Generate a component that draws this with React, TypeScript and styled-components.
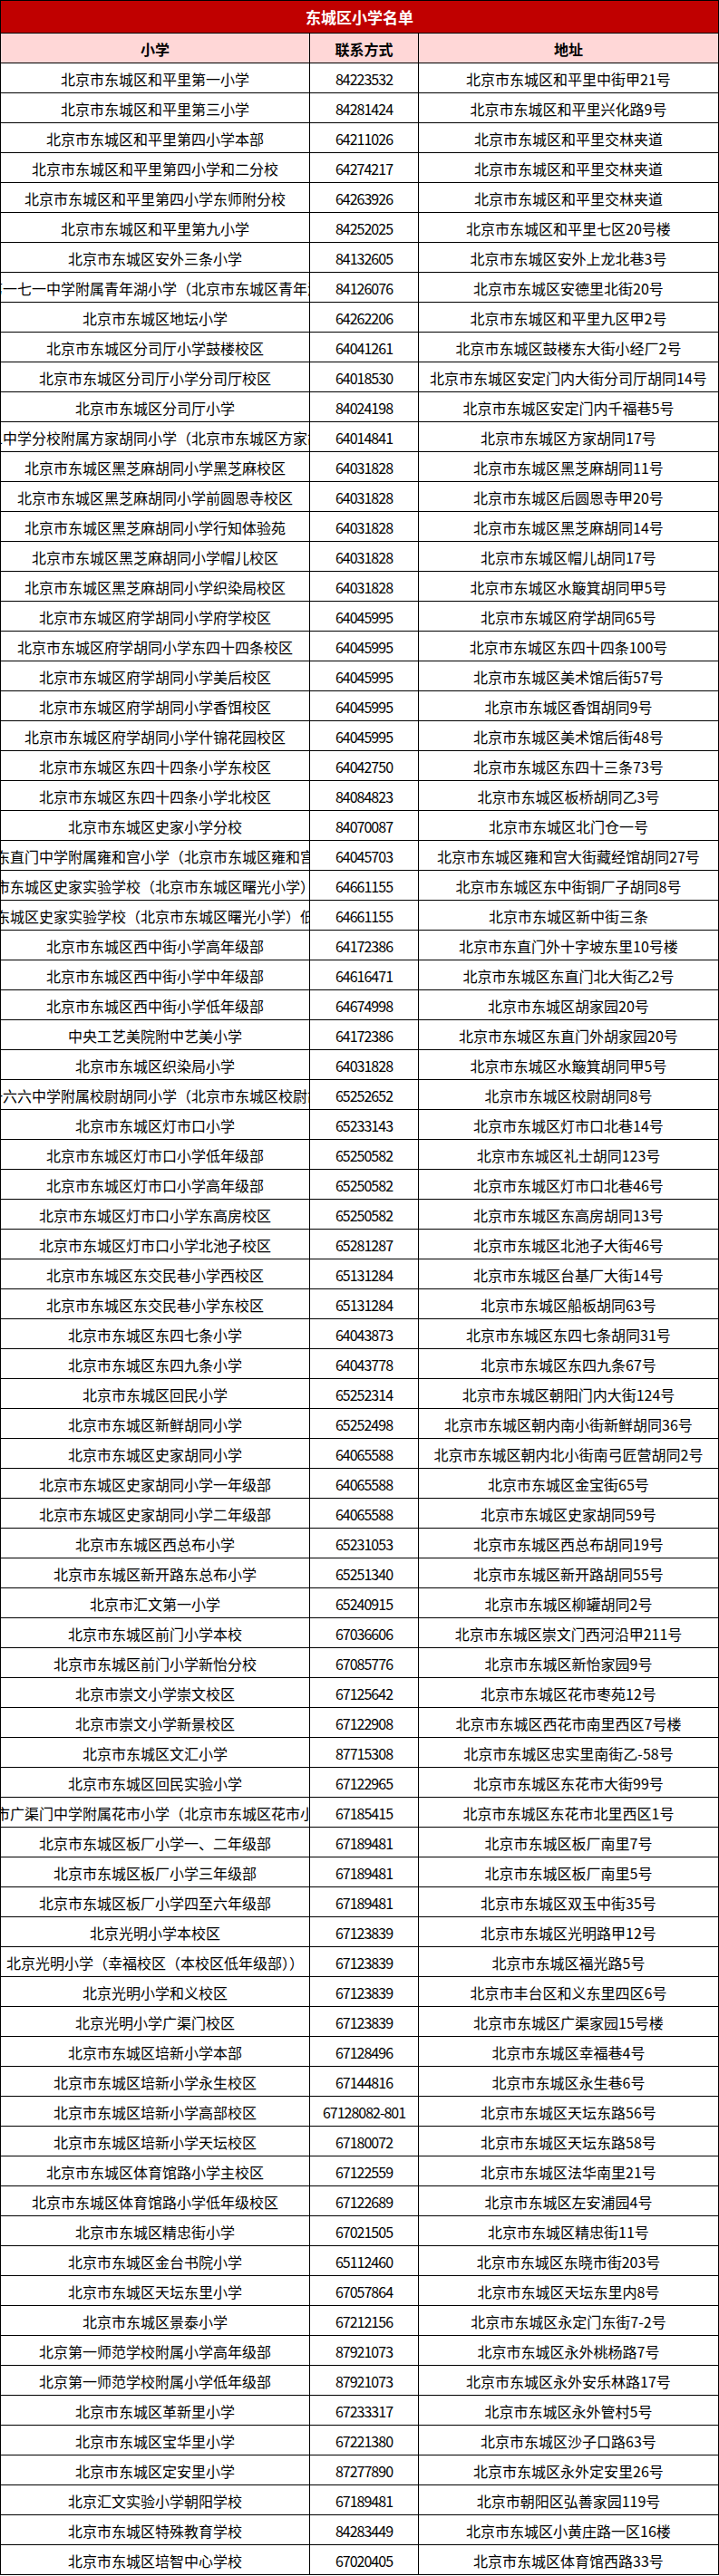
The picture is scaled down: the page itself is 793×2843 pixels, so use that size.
import React from "react";
import styled, { createGlobalStyle } from "styled-components";

const GlobalStyle = createGlobalStyle`
  html, body { margin: 0; padding: 0; background: #ffffff; }
  body {
    font-family: "Noto Sans CJK SC", "Noto Sans", sans-serif;
    color: #000000;
  }
`;

const Sheet = styled.div`
  width: 793px;
  box-sizing: border-box;
  border-left: 1px solid #000;
  border-top: 1px solid #000;
`;

const Title = styled.div`
  height: 36px;
  box-sizing: border-box;
  display: flex;
  align-items: center;
  justify-content: center;
  background: #c00000;
  color: #ffffff;
  font-weight: 700;
  font-size: 17px;
  border-right: 1px solid #000;
  border-bottom: 1px solid #000;
`;

const Row = styled.div`
  display: grid;
  grid-template-columns: 341px 120px 331px;
  height: 33px;
`;

const Cell = styled.div<{ $head?: boolean; $num?: boolean }>`
  box-sizing: border-box;
  height: 33px;
  display: flex;
  align-items: center;
  justify-content: center;
  overflow: hidden;
  white-space: nowrap;
  border-right: 1px solid #000;
  border-bottom: 1px solid #000;
  background: ${(p) => (p.$head ? "#ffd7d7" : "#ffffff")};
  font-size: 16px;
  font-weight: ${(p) => (p.$head ? 700 : 400)};
  letter-spacing: ${(p) => (p.$num ? "-1px" : "0")};
  padding-top: 2px;
`;

const Text = styled.span`
  flex-shrink: 0;
`;

type School = [string, string, string];

const schools: School[] = [
  ["北京市东城区和平里第一小学", "84223532", "北京市东城区和平里中街甲21号"],
  ["北京市东城区和平里第三小学", "84281424", "北京市东城区和平里兴化路9号"],
  ["北京市东城区和平里第四小学本部", "64211026", "北京市东城区和平里交林夹道"],
  ["北京市东城区和平里第四小学和二分校", "64274217", "北京市东城区和平里交林夹道"],
  ["北京市东城区和平里第四小学东师附分校", "64263926", "北京市东城区和平里交林夹道"],
  ["北京市东城区和平里第九小学", "84252025", "北京市东城区和平里七区20号楼"],
  ["北京市东城区安外三条小学", "84132605", "北京市东城区安外上龙北巷3号"],
  ["北京市第一七一中学附属青年湖小学（北京市东城区青年湖小学）", "84126076", "北京市东城区安德里北街20号"],
  ["北京市东城区地坛小学", "64262206", "北京市东城区和平里九区甲2号"],
  ["北京市东城区分司厅小学鼓楼校区", "64041261", "北京市东城区鼓楼东大街小经厂2号"],
  ["北京市东城区分司厅小学分司厅校区", "64018530", "北京市东城区安定门内大街分司厅胡同14号"],
  ["北京市东城区分司厅小学", "84024198", "北京市东城区安定门内千福巷5号"],
  ["北京市第二中学分校附属方家胡同小学（北京市东城区方家胡同小学）", "64014841", "北京市东城区方家胡同17号"],
  ["北京市东城区黑芝麻胡同小学黑芝麻校区", "64031828", "北京市东城区黑芝麻胡同11号"],
  ["北京市东城区黑芝麻胡同小学前圆恩寺校区", "64031828", "北京市东城区后圆恩寺甲20号"],
  ["北京市东城区黑芝麻胡同小学行知体验苑", "64031828", "北京市东城区黑芝麻胡同14号"],
  ["北京市东城区黑芝麻胡同小学帽儿校区", "64031828", "北京市东城区帽儿胡同17号"],
  ["北京市东城区黑芝麻胡同小学织染局校区", "64031828", "北京市东城区水簸箕胡同甲5号"],
  ["北京市东城区府学胡同小学府学校区", "64045995", "北京市东城区府学胡同65号"],
  ["北京市东城区府学胡同小学东四十四条校区", "64045995", "北京市东城区东四十四条100号"],
  ["北京市东城区府学胡同小学美后校区", "64045995", "北京市东城区美术馆后街57号"],
  ["北京市东城区府学胡同小学香饵校区", "64045995", "北京市东城区香饵胡同9号"],
  ["北京市东城区府学胡同小学什锦花园校区", "64045995", "北京市东城区美术馆后街48号"],
  ["北京市东城区东四十四条小学东校区", "64042750", "北京市东城区东四十三条73号"],
  ["北京市东城区东四十四条小学北校区", "84084823", "北京市东城区板桥胡同乙3号"],
  ["北京市东城区史家小学分校", "84070087", "北京市东城区北门仓一号"],
  ["北京市东直门中学附属雍和宫小学（北京市东城区雍和宫小学）", "64045703", "北京市东城区雍和宫大街藏经馆胡同27号"],
  ["北京市东城区史家实验学校（北京市东城区曙光小学）本部", "64661155", "北京市东城区东中街铜厂子胡同8号"],
  ["北京市东城区史家实验学校（北京市东城区曙光小学）低年级部", "64661155", "北京市东城区新中街三条"],
  ["北京市东城区西中街小学高年级部", "64172386", "北京市东直门外十字坡东里10号楼"],
  ["北京市东城区西中街小学中年级部", "64616471", "北京市东城区东直门北大街乙2号"],
  ["北京市东城区西中街小学低年级部", "64674998", "北京市东城区胡家园20号"],
  ["中央工艺美院附中艺美小学", "64172386", "北京市东城区东直门外胡家园20号"],
  ["北京市东城区织染局小学", "64031828", "北京市东城区水簸箕胡同甲5号"],
  ["北京市第一六六中学附属校尉胡同小学（北京市东城区校尉胡同小学）", "65252652", "北京市东城区校尉胡同8号"],
  ["北京市东城区灯市口小学", "65233143", "北京市东城区灯市口北巷14号"],
  ["北京市东城区灯市口小学低年级部", "65250582", "北京市东城区礼士胡同123号"],
  ["北京市东城区灯市口小学高年级部", "65250582", "北京市东城区灯市口北巷46号"],
  ["北京市东城区灯市口小学东高房校区", "65250582", "北京市东城区东高房胡同13号"],
  ["北京市东城区灯市口小学北池子校区", "65281287", "北京市东城区北池子大街46号"],
  ["北京市东城区东交民巷小学西校区", "65131284", "北京市东城区台基厂大街14号"],
  ["北京市东城区东交民巷小学东校区", "65131284", "北京市东城区船板胡同63号"],
  ["北京市东城区东四七条小学", "64043873", "北京市东城区东四七条胡同31号"],
  ["北京市东城区东四九条小学", "64043778", "北京市东城区东四九条67号"],
  ["北京市东城区回民小学", "65252314", "北京市东城区朝阳门内大街124号"],
  ["北京市东城区新鲜胡同小学", "65252498", "北京市东城区朝内南小街新鲜胡同36号"],
  ["北京市东城区史家胡同小学", "64065588", "北京市东城区朝内北小街南弓匠营胡同2号"],
  ["北京市东城区史家胡同小学一年级部", "64065588", "北京市东城区金宝街65号"],
  ["北京市东城区史家胡同小学二年级部", "64065588", "北京市东城区史家胡同59号"],
  ["北京市东城区西总布小学", "65231053", "北京市东城区西总布胡同19号"],
  ["北京市东城区新开路东总布小学", "65251340", "北京市东城区新开路胡同55号"],
  ["北京市汇文第一小学", "65240915", "北京市东城区柳罐胡同2号"],
  ["北京市东城区前门小学本校", "67036606", "北京市东城区崇文门西河沿甲211号"],
  ["北京市东城区前门小学新怡分校", "67085776", "北京市东城区新怡家园9号"],
  ["北京市崇文小学崇文校区", "67125642", "北京市东城区花市枣苑12号"],
  ["北京市崇文小学新景校区", "67122908", "北京市东城区西花市南里西区7号楼"],
  ["北京市东城区文汇小学", "87715308", "北京市东城区忠实里南街乙-58号"],
  ["北京市东城区回民实验小学", "67122965", "北京市东城区东花市大街99号"],
  ["北京市广渠门中学附属花市小学（北京市东城区花市小学）", "67185415", "北京市东城区东花市北里西区1号"],
  ["北京市东城区板厂小学一、二年级部", "67189481", "北京市东城区板厂南里7号"],
  ["北京市东城区板厂小学三年级部", "67189481", "北京市东城区板厂南里5号"],
  ["北京市东城区板厂小学四至六年级部", "67189481", "北京市东城区双玉中街35号"],
  ["北京光明小学本校区", "67123839", "北京市东城区光明路甲12号"],
  ["北京光明小学（幸福校区（本校区低年级部））", "67123839", "北京市东城区福光路5号"],
  ["北京光明小学和义校区", "67123839", "北京市丰台区和义东里四区6号"],
  ["北京光明小学广渠门校区", "67123839", "北京市东城区广渠家园15号楼"],
  ["北京市东城区培新小学本部", "67128496", "北京市东城区幸福巷4号"],
  ["北京市东城区培新小学永生校区", "67144816", "北京市东城区永生巷6号"],
  ["北京市东城区培新小学高部校区", "67128082-801", "北京市东城区天坛东路56号"],
  ["北京市东城区培新小学天坛校区", "67180072", "北京市东城区天坛东路58号"],
  ["北京市东城区体育馆路小学主校区", "67122559", "北京市东城区法华南里21号"],
  ["北京市东城区体育馆路小学低年级校区", "67122689", "北京市东城区左安浦园4号"],
  ["北京市东城区精忠街小学", "67021505", "北京市东城区精忠街11号"],
  ["北京市东城区金台书院小学", "65112460", "北京市东城区东晓市街203号"],
  ["北京市东城区天坛东里小学", "67057864", "北京市东城区天坛东里内8号"],
  ["北京市东城区景泰小学", "67212156", "北京市东城区永定门东街7-2号"],
  ["北京第一师范学校附属小学高年级部", "87921073", "北京市东城区永外桃杨路7号"],
  ["北京第一师范学校附属小学低年级部", "87921073", "北京市东城区永外安乐林路17号"],
  ["北京市东城区革新里小学", "67233317", "北京市东城区永外管村5号"],
  ["北京市东城区宝华里小学", "67221380", "北京市东城区沙子口路63号"],
  ["北京市东城区定安里小学", "87277890", "北京市东城区永外定安里26号"],
  ["北京汇文实验小学朝阳学校", "67189481", "北京市朝阳区弘善家园119号"],
  ["北京市东城区特殊教育学校", "84283449", "北京市东城区小黄庄路一区16楼"],
  ["北京市东城区培智中心学校", "67020405", "北京市东城区体育馆西路33号"],
];

export default function App() {
  return (
    <>
      <GlobalStyle />
      <Sheet>
        <Title>东城区小学名单</Title>
        <Row>
          <Cell $head>
            <Text>小学</Text>
          </Cell>
          <Cell $head>
            <Text>联系方式</Text>
          </Cell>
          <Cell $head>
            <Text>地址</Text>
          </Cell>
        </Row>
        {schools.map(([name, phone, addr], i) => (
          <Row key={i}>
            <Cell>
              <Text>{name}</Text>
            </Cell>
            <Cell $num>
              <Text>{phone}</Text>
            </Cell>
            <Cell>
              <Text>{addr}</Text>
            </Cell>
          </Row>
        ))}
      </Sheet>
    </>
  );
}
